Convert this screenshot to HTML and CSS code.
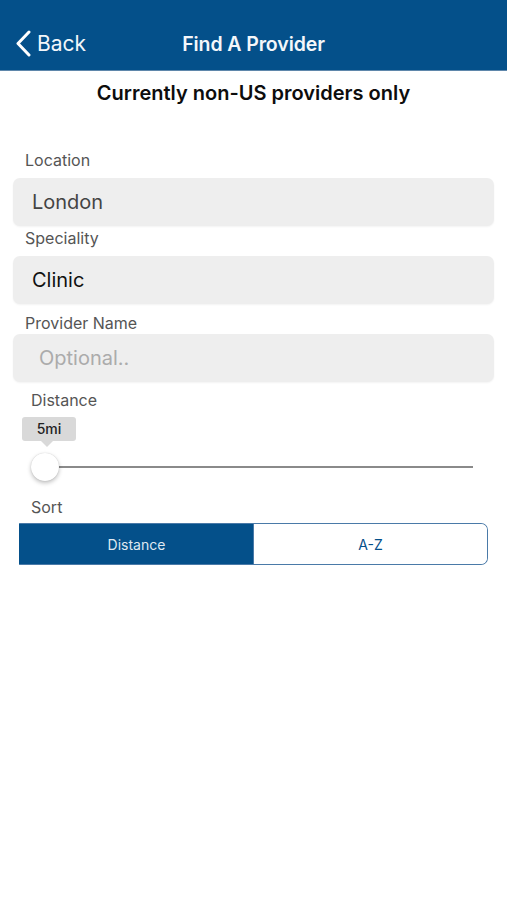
FILE: index.html
```html
<!DOCTYPE html>
<html lang="en">
<head>
  <meta charset="UTF-8" />
  <meta name="viewport" content="width=device-width, initial-scale=1.0"/>
  <title>Find A Provider</title>
  <link rel="stylesheet" href="styles.css">
</head>
<body>
  <header class="nav-bar">
    <a class="back" href="#">
      <svg class="chevron" width="16" height="28" viewBox="0 0 16 28">
        <polyline points="13,2 2,13.5 13,25" fill="none" stroke="#fff" stroke-width="3" stroke-linecap="round" stroke-linejoin="round"/>
      </svg>
      <span>Back</span>
    </a>
    <h1>Find A Provider</h1>
    <span></span>
  </header>

  <p class="notice">Currently non-US providers only</p>

  <section class="search-form">
    <label class="field-label first">Location</label>
    <div class="field">London</div>

    <label class="field-label second">Speciality</label>
    <div class="field dark">Clinic</div>

    <label class="field-label third">Provider Name</label>
    <div class="field placeholder">Optional..</div>

    <label class="field-label indent distance-label">Distance</label>
    <div class="slider-tip">5mi</div>
    <div class="slider">
      <div class="track"></div>
      <div class="thumb"></div>
    </div>

    <label class="field-label indent sort-label">Sort</label>
    <div class="segmented">
      <button class="segment active">Distance</button>
      <button class="segment">A-Z</button>
    </div>
  </section>
</body>
</html>
```

FILE: styles.css
```css
:root {
  --brand: #04508a;
  --field-bg: #eeeeee;
  --label: #555555;
}

body {
  margin: 0;
  font-family: Inter, "Liberation Sans", sans-serif;
  background: #fff;
  color: #111;
}

.nav-bar {
  height: 70px;
  box-sizing: border-box;
  padding-top: 17px;
  background: var(--brand);
  display: grid;
  grid-template-columns: 1fr auto 1fr;
  align-items: center;
  box-shadow: 0 1px 0 #5f87ab;
}

.back {
  display: flex;
  align-items: center;
  gap: 5px;
  padding-left: 16px;
  color: #f2f6fa;
  text-decoration: none;
  font-size: 21px;
}

.chevron {
  display: block;
}

.nav-bar h1 {
  margin: 0;
  font-size: 19.5px;
  font-weight: 600;
  color: #f4f7fa;
  letter-spacing: -0.1px;
}

.notice {
  margin: 11px 0 0;
  text-align: center;
  font-size: 20px;
  line-height: 24px;
  font-weight: 600;
  color: #0d0d0d;
  letter-spacing: 0;
}

.search-form {
  padding: 0 13px;
}

.field-label {
  display: block;
  padding-left: 12px;
  font-size: 16px;
  line-height: 20px;
  color: var(--label);
}

.field-label.indent {
  padding-left: 18px;
}

.first {
  margin: 45px 0 8px;
}

.second {
  margin: 2px 0 8px;
}

.third {
  margin: 9px 0 1px;
}

.distance-label {
  margin: 8px 0 7px;
}

.sort-label {
  margin: 16px 0 6px;
}

.field {
  height: 48px;
  border-radius: 7px;
  background: var(--field-bg);
  display: flex;
  align-items: center;
  padding-left: 19px;
  font-size: 20px;
  color: #444;
  box-shadow: 0 1px 2px rgba(0, 0, 0, 0.05);
}

.field.dark {
  color: #111;
}

.field.placeholder {
  padding-left: 26px;
  color: #ababab;
}

.slider-tip {
  position: relative;
  width: 54px;
  height: 24px;
  margin-left: 9px;
  border-radius: 3px;
  background: #d9d9d9;
  font-size: 14px;
  font-weight: 500;
  line-height: 24px;
  text-align: center;
  color: #222;
}

.slider-tip::after {
  content: "";
  position: absolute;
  left: 19px;
  top: 24px;
  border: 6px solid transparent;
  border-top-color: #d9d9d9;
  border-bottom: 0;
}

.slider {
  position: relative;
  height: 28px;
  margin: 12px 0 0 18px;
  width: 442px;
}

.track {
  position: absolute;
  left: 14px;
  right: 0;
  top: 13px;
  height: 2px;
  background: #8a8a8a;
}

.thumb {
  position: absolute;
  left: 0;
  top: 0;
  width: 28px;
  height: 28px;
  border-radius: 50%;
  background: #fff;
  box-shadow: 0 2px 4px rgba(0, 0, 0, 0.25), 0 0 1px rgba(0, 0, 0, 0.2);
}

.segmented {
  display: flex;
  margin-left: 6px;
  width: 469px;
  height: 42px;
  box-sizing: border-box;
  border: 1.5px solid #4a7aa8;
  border-left-color: var(--brand);
  border-radius: 0 7px 7px 0;
  overflow: hidden;
}

.segment {
  flex: 1;
  border: none;
  background: #fff;
  font-family: inherit;
  font-size: 14px;
  color: var(--brand);
  padding: 0;
}

.segment.active {
  background: var(--brand);
  color: #dfe8f1;
  border-right: 1.5px solid #4a7aa8;
}
```
